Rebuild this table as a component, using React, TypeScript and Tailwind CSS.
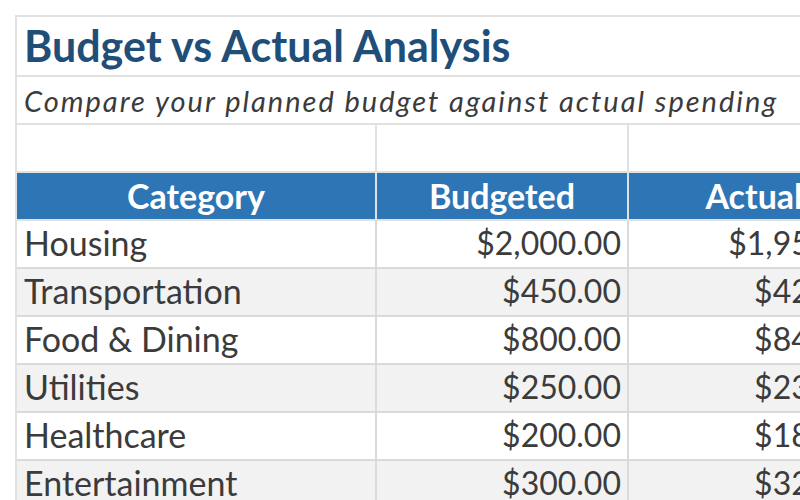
import React from "react";

// --- Budget rows ---
interface BudgetRow {
	category: string;
	budgeted: number;
	actual: number;
}

const ROWS: BudgetRow[] = [
	{ category: "Housing", budgeted: 2000, actual: 1950 },
	{ category: "Transportation", budgeted: 450, actual: 425 },
	{ category: "Food & Dining", budgeted: 800, actual: 845 },
	{ category: "Utilities", budgeted: 250, actual: 235 },
	{ category: "Healthcare", budgeted: 200, actual: 180 },
	{ category: "Entertainment", budgeted: 300, actual: 325 },
	{ category: "Savings", budgeted: 500, actual: 500 },
];

const money = (n: number) =>
	"$" + n.toLocaleString("en-US", { minimumFractionDigits: 2, maximumFractionDigits: 2 });

const FONT = { fontFamily: "Lato, 'Open Sans', sans-serif" };

export default function App() {
	return (
		<div className="w-[800px] h-[500px] overflow-hidden bg-white pl-[15px] pt-[15px]" style={FONT}>
			<div className="w-max border-l-2 border-t-2 border-[#e1e1e1]">
				{/* title */}
				<div className="flex h-[60px] items-end border-b-2 border-[#e1e1e1] pl-[7px] pb-[8px]">
					<h1 className="text-[43px] font-bold leading-none text-[#1f4e79]">
						Budget vs Actual Analysis
					</h1>
				</div>

				{/* subtitle */}
				<div className="flex h-[48px] items-end border-b-2 border-[#e1e1e1] pl-[7px] pb-[8px]">
					<p className="text-[29px] italic leading-none tracking-[2px] text-[#3b3b3b] whitespace-nowrap">
						Compare your planned budget against actual spending
					</p>
				</div>

				{/* empty spacer row */}
				<div className="flex h-[48px]">
					<div className="w-[360px] border-r-2 border-b-2 border-[#e1e1e1]" />
					<div className="w-[252px] border-r-2 border-b-2 border-[#e1e1e1]" />
					<div className="w-[252px] border-r-2 border-b-2 border-[#e1e1e1]" />
					<div className="w-[252px] border-r-2 border-b-2 border-[#e1e1e1]" />
				</div>

				{/* header */}
				<div className="flex h-[48px] text-[34px] font-bold leading-none text-white">
					<div className="flex w-[360px] items-end justify-center border-r-2 border-b-2 border-[#e1e1e1] bg-[#2e75b6] pb-[6px]">
						Category
					</div>
					<div className="flex w-[252px] items-end justify-center border-r-2 border-b-2 border-[#e1e1e1] bg-[#2e75b6] pb-[6px]">
						Budgeted
					</div>
					<div className="flex w-[252px] items-end justify-center border-r-2 border-b-2 border-[#e1e1e1] bg-[#2e75b6] pb-[6px]">
						Actual
					</div>
					<div className="flex w-[252px] items-end justify-center border-r-2 border-b-2 border-[#e1e1e1] bg-[#2e75b6] pb-[6px]">
						Variance
					</div>
				</div>

				{/* data */}
				{ROWS.map((row, i) => (
					<div
						key={row.category}
						className={`flex h-[48px] text-[32px] leading-none text-[#3b3b3b] ${i % 2 === 1 ? "bg-[#f2f2f2]" : "bg-white"}`}
					>
						<div className="flex w-[360px] items-end border-r-2 border-b-2 border-[#dadada] pl-[7px] pb-[7px] text-[34px]">
							{row.category}
						</div>
						<div className="flex w-[252px] items-end justify-end border-r-2 border-b-2 border-[#dadada] pr-[6px] pb-[8px]">
							{money(row.budgeted)}
						</div>
						<div className="flex w-[252px] items-end justify-end border-r-2 border-b-2 border-[#dadada] pr-[6px] pb-[8px]">
							{money(row.actual)}
						</div>
						<div className="flex w-[252px] items-end justify-end border-r-2 border-b-2 border-[#dadada] pr-[6px] pb-[8px]">
							{money(row.budgeted - row.actual)}
						</div>
					</div>
				))}
			</div>
		</div>
	);
}
